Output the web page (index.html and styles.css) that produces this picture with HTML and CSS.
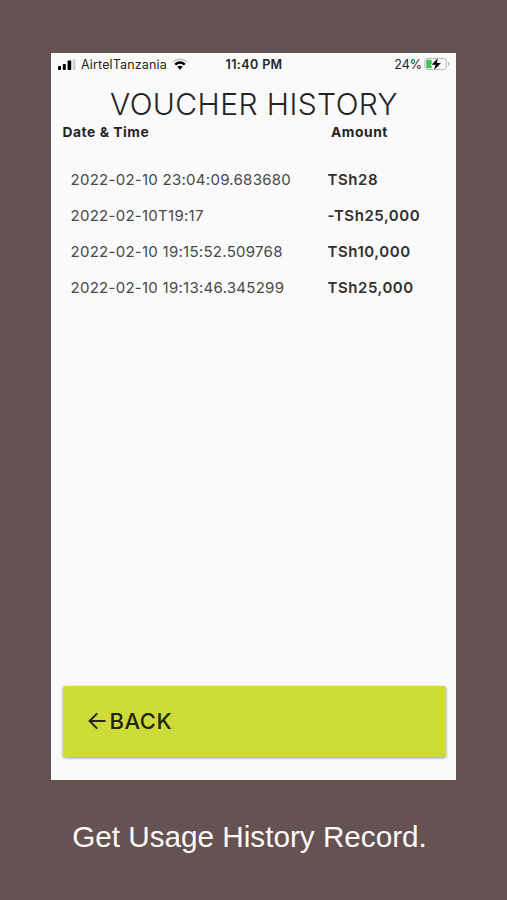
FILE: index.html
```html
<!DOCTYPE html>
<html lang="en">
<head>
    <meta charset="UTF-8">
    <meta name="viewport" content="width=device-width, initial-scale=1.0">
    <title>Voucher History</title>
    <link rel="stylesheet" href="styles.css">
</head>
<body>
    <main class="phone">
        <div class="status-bar">
            <div class="carrier">
                <svg class="signal" width="18" height="11" viewBox="0 0 18 11">
                    <rect x="0" y="7" width="3" height="4" rx="0.8"/>
                    <rect x="4.8" y="5" width="3" height="6" rx="0.8"/>
                    <rect x="9.6" y="1.5" width="3.6" height="9.5" rx="0.8"/>
                    <rect x="14.6" y="0" width="3" height="11" rx="0.8" fill="#d2d2d2"/>
                </svg>
                <span class="carrier-name">AirtelTanzania</span>
                <svg class="wifi" width="16" height="12" viewBox="0 0 16 12">
                    <path d="M1 4.2Q8 -2 15 4.2" fill="none" stroke="#c9c9c9" stroke-width="1.8"/>
                    <path d="M3.2 6.6Q8 2.4 12.8 6.6" fill="none" stroke="#000" stroke-width="2.3"/>
                    <path d="M5.3 8.8Q8 6.6 10.7 8.8L8 11.7Z"/>
                </svg>
            </div>
            <span class="clock">11:40 PM</span>
            <div class="power">
                <span class="percent">24%</span>
                <svg width="26" height="14" viewBox="0 0 26 14">
                    <rect x="0.8" y="1.4" width="21.6" height="11.2" rx="3" fill="none" stroke="#b5b5b5"/>
                    <rect x="2.2" y="2.8" width="5.6" height="8.4" rx="1" fill="#3cc65c"/>
                    <path d="M24 4.8Q26.6 7 24 9.2Z" fill="#b5b5b5"/>
                    <path d="M14 1L7.6 7.8H11.6L10 13L17 6H12.8Z" stroke="#fafafa" stroke-width="1.4"/>
                    <path d="M14 1L7.6 7.8H11.6L10 13L17 6H12.8Z"/>
                </svg>
            </div>
        </div>

        <h1>VOUCHER HISTORY</h1>

        <div class="history-head">
            <span class="head-date">Date &amp; Time</span>
            <span class="head-amount">Amount</span>
        </div>
        <div class="history">
            <div class="row">
                <span class="date">2022-02-10 23:04:09.683680</span>
                <span class="amount">TSh28</span>
            </div>
            <div class="row">
                <span class="date">2022-02-10T19:17</span>
                <span class="amount">-TSh25,000</span>
            </div>
            <div class="row">
                <span class="date">2022-02-10 19:15:52.509768</span>
                <span class="amount">TSh10,000</span>
            </div>
            <div class="row">
                <span class="date">2022-02-10 19:13:46.345299</span>
                <span class="amount">TSh25,000</span>
            </div>
        </div>

        <button type="button" class="back">
            <svg width="18" height="18" viewBox="0 0 18 18">
                <path d="M17.5 9H1.8M9.2 1.4L1.6 9L9.2 16.6" fill="none" stroke="#24260f" stroke-width="2"/>
            </svg>
            <span>BACK</span>
        </button>
    </main>

    <p class="caption">Get Usage History Record.</p>
</body>
</html>
```

FILE: styles.css
```css
* {
    box-sizing: border-box;
}
body {
    margin: 0;
    height: 900px;
    padding-top: 53px;
    background: #645352;
    font-family: Inter, sans-serif;
    color: #242424;
    overflow: hidden;
}
.phone {
    display: flex;
    flex-direction: column;
    width: 405px;
    height: 727px;
    margin-left: 51px;
    padding: 0 11px 23.5px;
    background: #fafafa;
}

/* Status bar */
.status-bar {
    display: grid;
    grid-template-columns: 1fr auto 1fr;
    align-items: center;
    height: 22px;
    margin: 0 -5px 0 -4px;
    font-size: 12.5px;
}
.carrier {
    display: flex;
    align-items: center;
}
.carrier-name {
    margin: 0 5px 0 5px;
    letter-spacing: 0.15px;
}
.clock {
    font-weight: 600;
    letter-spacing: 0.4px;
}
.power {
    display: flex;
    align-items: center;
    justify-content: flex-end;
    gap: 2px;
}

/* Voucher history */
h1 {
    margin: 10px 0 0 1px;
    font-size: 30px;
    font-weight: 300;
    line-height: 38px;
    letter-spacing: 0.42px;
    text-align: center;
    white-space: nowrap;
}
.history-head {
    display: flex;
    height: 18px;
    padding-left: 0.5px;
    font-size: 13.8px;
    font-weight: 700;
    line-height: 18px;
    letter-spacing: 0.55px;
}
.head-date {
    width: 268.5px;
}
.history {
    flex: 1;
    padding: 21px 0 0 8.5px;
}
.row {
    display: flex;
    height: 36px;
    font-size: 15px;
    line-height: 36px;
}
.date {
    width: 257px;
    letter-spacing: 0.27px;
    color: #484848;
}
.amount {
    font-weight: 600;
    letter-spacing: 0.55px;
    color: #303030;
}

/* Back button */
.back {
    display: flex;
    align-items: center;
    gap: 4px;
    width: 383px;
    height: 71px;
    margin-left: 0.5px;
    padding: 0 25px;
    border: none;
    border-radius: 2px;
    background: #cddc39;
    box-shadow: 0 1px 3px rgba(0, 0, 0, 0.4);
    color: #24260f;
    font-family: inherit;
    font-size: 22px;
    font-weight: 500;
    letter-spacing: 0.5px;
    cursor: pointer;
}

.caption {
    margin: 40px 0 0 -8px;
    color: #fff8f7;
    font-family: "Liberation Sans", Arial, sans-serif;
    font-size: 29.7px;
    line-height: 34px;
    text-align: center;
}
```
